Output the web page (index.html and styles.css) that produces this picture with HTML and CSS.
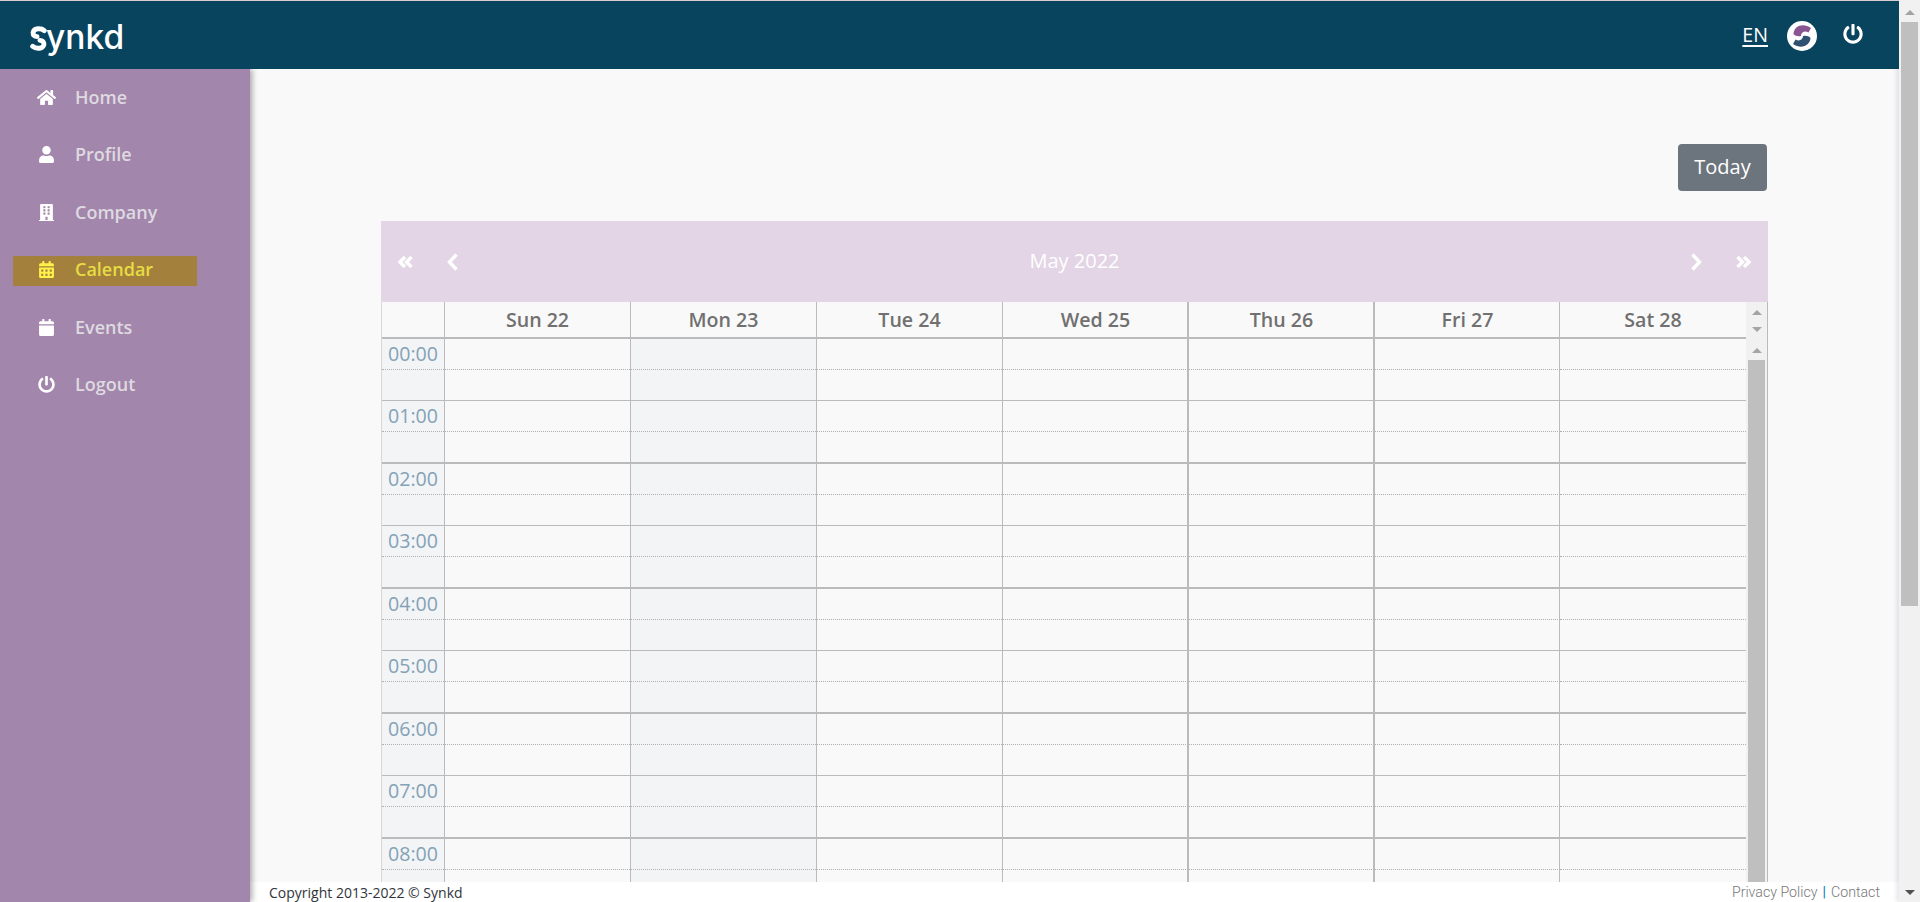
FILE: index.html
```html
<!DOCTYPE html>
<html lang="en">
<head>
<meta charset="utf-8">
<title>Synkd - Calendar</title>
<link rel="stylesheet" href="styles.css">
</head>
<body>
<div class="window">
  <div class="app">
    <header class="topbar">
      <a class="logo" href="#">
        <svg class="logo-s" viewBox="0 0 15 23"><path d="M12.800 4.200C10 1.800 3.500 1.600 2.600 5.800 2.200 8.500 4 9.800 6.200 9.800"/><path d="M2.200 18.800C5 21.200 11.500 21.400 12.400 17.200 12.800 14.500 11 13.200 8.800 13.200"/></svg>
        <span class="logo-text">ynkd</span>
      </a>
      <nav class="top-actions">
        <a class="lang" href="#">EN</a>
        <svg class="avatar" viewBox="0 0 30 30"><circle cx="15" cy="15" r="15" fill="#fff"/><path class="av-top" d="M6.500 13C7 5 16 1.500 24 7L21.500 11.500C18 9.500 14 11 14 15 11 15.500 8 15 6.500 13z"/><path class="av-bottom" d="M23.500 17C23 25 14 28.500 6 23L8.500 18.500C12 20.500 16 19 16 15 19 14.500 22 15 23.500 17z"/></svg>
        <svg class="power" viewBox="0 0 512 512"><path d="M400 54.100c63 45 104 118.600 104 201.900 0 136.800-110.800 247.700-247.500 248C120 504.300 8.200 393 8 256.400 7.900 173.100 48.900 99.300 111.800 54.200c11.700-8.300 28-4.800 35 7.700L162.600 90c5.900 10.500 3.100 23.800-6.600 31-41.500 30.800-68 79.600-68 134.900-.1 92.300 74.500 168.100 168 168.100 91.600 0 168.600-74.200 168-169.100-.3-51.800-24.700-101.800-68.100-134-9.700-7.200-12.400-20.500-6.500-30.900l15.800-28.100c7-12.400 23.200-16.100 34.800-7.800zM296 264V24c0-13.300-10.700-24-24-24h-32c-13.300 0-24 10.700-24 24v240c0 13.300 10.700 24 24 24h32c13.300 0 24-10.700 24-24z"/></svg>
      </nav>
    </header>
    <div class="body">
      <aside class="sidebar">
        <a class="nav-item" href="#"><span class="nav-icon"><svg viewBox="0 0 576 512" class="i-home"><path d="M280.370 148.260L96 300.110V464a16 16 0 0 0 16 16l112.060-.29a16 16 0 0 0 15.920-16V368a16 16 0 0 1 16-16h64a16 16 0 0 1 16 16v95.640a16 16 0 0 0 16 16.050L464 480a16 16 0 0 0 16-16V300L295.670 148.260a12.190 12.190 0 0 0-15.300 0zM571.600 251.470L488 182.560V44.050a12 12 0 0 0-12-12h-56a12 12 0 0 0-12 12v72.610L318.470 43a48 48 0 0 0-61 0L4.340 251.470a12 12 0 0 0-1.600 16.900l25.500 31A12 12 0 0 0 45.150 301l235.220-193.740a12.190 12.190 0 0 1 15.300 0L530.900 301a12 12 0 0 0 16.900-1.600l25.500-31a12 12 0 0 0-1.700-16.930z"/></svg></span>Home</a>
        <a class="nav-item" href="#"><span class="nav-icon"><svg viewBox="0 0 448 512"><path d="M224 256c70.700 0 128-57.300 128-128S294.700 0 224 0 96 57.300 96 128s57.300 128 128 128zm89.600 32h-16.700c-22.200 10.200-46.900 16-72.900 16s-50.600-5.800-72.900-16h-16.700C60.200 288 0 348.200 0 422.400V464c0 26.500 21.500 48 48 48h352c26.500 0 48-21.500 48-48v-41.600c0-74.200-60.200-134.400-134.400-134.400z"/></svg></span>Profile</a>
        <a class="nav-item" href="#"><span class="nav-icon"><svg viewBox="0 0 448 512"><path d="M436 480h-20V24c0-13.255-10.745-24-24-24H56C42.745 0 32 10.745 32 24v456H12c-6.627 0-12 5.373-12 12v20h448v-20c0-6.627-5.373-12-12-12zM128 76c0-6.627 5.373-12 12-12h40c6.627 0 12 5.373 12 12v40c0 6.627-5.373 12-12 12h-40c-6.627 0-12-5.373-12-12V76zm0 96c0-6.627 5.373-12 12-12h40c6.627 0 12 5.373 12 12v40c0 6.627-5.373 12-12 12h-40c-6.627 0-12-5.373-12-12v-40zm52 148h-40c-6.627 0-12-5.373-12-12v-40c0-6.627 5.373-12 12-12h40c6.627 0 12 5.373 12 12v40c0 6.627-5.373 12-12 12zm76 160h-64v-84c0-6.627 5.373-12 12-12h40c6.627 0 12 5.373 12 12v84zm64-172c0 6.627-5.373 12-12 12h-40c-6.627 0-12-5.373-12-12v-40c0-6.627 5.373-12 12-12h40c6.627 0 12 5.373 12 12v40zm0-96c0 6.627-5.373 12-12 12h-40c-6.627 0-12-5.373-12-12v-40c0-6.627 5.373-12 12-12h40c6.627 0 12 5.373 12 12v40zm0-96c0 6.627-5.373 12-12 12h-40c-6.627 0-12-5.373-12-12V76c0-6.627 5.373-12 12-12h40c6.627 0 12 5.373 12 12v40z"/></svg></span>Company</a>
        <a class="nav-item active" href="#"><span class="nav-icon"><svg viewBox="0 0 448 512"><path d="M0 464c0 26.500 21.500 48 48 48h352c26.500 0 48-21.500 48-48V192H0v272zm320-196c0-6.600 5.400-12 12-12h40c6.600 0 12 5.400 12 12v40c0 6.600-5.400 12-12 12h-40c-6.600 0-12-5.400-12-12v-40zm0 128c0-6.600 5.400-12 12-12h40c6.600 0 12 5.400 12 12v40c0 6.600-5.400 12-12 12h-40c-6.600 0-12-5.400-12-12v-40zM192 268c0-6.600 5.400-12 12-12h40c6.600 0 12 5.400 12 12v40c0 6.600-5.400 12-12 12h-40c-6.600 0-12-5.400-12-12v-40zm0 128c0-6.600 5.400-12 12-12h40c6.600 0 12 5.400 12 12v40c0 6.600-5.400 12-12 12h-40c-6.600 0-12-5.400-12-12v-40zM64 268c0-6.600 5.400-12 12-12h40c6.600 0 12 5.400 12 12v40c0 6.600-5.400 12-12 12H76c-6.600 0-12-5.400-12-12v-40zm0 128c0-6.600 5.400-12 12-12h40c6.600 0 12 5.400 12 12v40c0 6.600-5.400 12-12 12H76c-6.600 0-12-5.400-12-12v-40zM400 64h-48V16c0-8.800-7.200-16-16-16h-32c-8.800 0-16 7.200-16 16v48H160V16c0-8.800-7.200-16-16-16h-32c-8.800 0-16 7.200-16 16v48H48C21.500 64 0 85.500 0 112v48h448v-48c0-26.500-21.500-48-48-48z"/></svg></span>Calendar</a>
        <a class="nav-item" href="#"><span class="nav-icon"><svg viewBox="0 0 448 512"><path d="M12 192h424c6.600 0 12 5.400 12 12v260c0 26.500-21.500 48-48 48H48c-26.500 0-48-21.500-48-48V204c0-6.600 5.400-12 12-12zm436-44v-36c0-26.500-21.500-48-48-48h-48V12c0-6.600-5.400-12-12-12h-40c-6.600 0-12 5.400-12 12v52H160V12c0-6.600-5.400-12-12-12h-40c-6.600 0-12 5.400-12 12v52H48C21.500 64 0 85.500 0 112v36c0 6.600 5.400 12 12 12h424c6.600 0 12-5.400 12-12z"/></svg></span>Events</a>
        <a class="nav-item" href="#"><span class="nav-icon"><svg class="i-power" viewBox="0 0 512 512"><path d="M400 54.100c63 45 104 118.600 104 201.900 0 136.800-110.800 247.700-247.500 248C120 504.300 8.200 393 8 256.400 7.900 173.100 48.900 99.300 111.800 54.200c11.700-8.300 28-4.800 35 7.700L162.600 90c5.900 10.500 3.100 23.800-6.600 31-41.500 30.800-68 79.600-68 134.900-.1 92.300 74.500 168.100 168 168.100 91.600 0 168.600-74.200 168-169.100-.3-51.800-24.700-101.800-68.100-134-9.700-7.200-12.400-20.500-6.500-30.900l15.800-28.100c7-12.400 23.200-16.100 34.800-7.800zM296 264V24c0-13.300-10.700-24-24-24h-32c-13.300 0-24 10.700-24 24v240c0 13.300 10.700 24 24 24h32c13.300 0 24-10.700 24-24z"/></svg></span>Logout</a>
      </aside>
      <div class="content">
        <main class="main">
          <div class="today-row"><button class="today-btn" type="button">Today</button></div>
          <section class="calendar">
            <div class="cal-toolbar">
              <div class="cal-nav">
                <svg class="chev-double" viewBox="0 0 15 12"><path d="M7 1L2 6l5 5M13.500 1l-5 5 5 5"/></svg>
                <svg class="chev-single" viewBox="0 0 11 18"><path d="M9.500 1.500L2.500 9l7 7.500"/></svg>
              </div>
              <div class="cal-title">May 2022</div>
              <div class="cal-nav">
                <svg class="chev-single" viewBox="0 0 11 18"><path d="M1.500 1.500l7 7.500-7 7.500"/></svg>
                <svg class="chev-double" viewBox="0 0 15 12"><path d="M1.500 1l5 5-5 5M8 1l5 5-5 5"/></svg>
              </div>
            </div>
            <div class="cal-grid">
              <div class="cal-table">
                <div class="cal-head">
                  <div class="head-corner"></div>
                  <div class="head-day">Sun 22</div>
                  <div class="head-day">Mon 23</div>
                  <div class="head-day">Tue 24</div>
                  <div class="head-day">Wed 25</div>
                  <div class="head-day">Thu 26</div>
                  <div class="head-day">Fri 27</div>
                  <div class="head-day">Sat 28</div>
                </div>
                <div class="hour even"><div class="time">00:00</div><div class="slot"></div><div class="slot today"></div><div class="slot"></div><div class="slot"></div><div class="slot"></div><div class="slot"></div><div class="slot"></div></div>
                <div class="hour"><div class="time">01:00</div><div class="slot"></div><div class="slot today"></div><div class="slot"></div><div class="slot"></div><div class="slot"></div><div class="slot"></div><div class="slot"></div></div>
                <div class="hour even"><div class="time">02:00</div><div class="slot"></div><div class="slot today"></div><div class="slot"></div><div class="slot"></div><div class="slot"></div><div class="slot"></div><div class="slot"></div></div>
                <div class="hour"><div class="time">03:00</div><div class="slot"></div><div class="slot today"></div><div class="slot"></div><div class="slot"></div><div class="slot"></div><div class="slot"></div><div class="slot"></div></div>
                <div class="hour even"><div class="time">04:00</div><div class="slot"></div><div class="slot today"></div><div class="slot"></div><div class="slot"></div><div class="slot"></div><div class="slot"></div><div class="slot"></div></div>
                <div class="hour"><div class="time">05:00</div><div class="slot"></div><div class="slot today"></div><div class="slot"></div><div class="slot"></div><div class="slot"></div><div class="slot"></div><div class="slot"></div></div>
                <div class="hour even"><div class="time">06:00</div><div class="slot"></div><div class="slot today"></div><div class="slot"></div><div class="slot"></div><div class="slot"></div><div class="slot"></div><div class="slot"></div></div>
                <div class="hour"><div class="time">07:00</div><div class="slot"></div><div class="slot today"></div><div class="slot"></div><div class="slot"></div><div class="slot"></div><div class="slot"></div><div class="slot"></div></div>
                <div class="hour even"><div class="time">08:00</div><div class="slot"></div><div class="slot today"></div><div class="slot"></div><div class="slot"></div><div class="slot"></div><div class="slot"></div><div class="slot"></div></div>
              </div>
              <div class="cal-scroll">
                <div class="arrow-up"></div>
                <div class="arrow-down"></div>
                <div class="arrow-up second"></div>
                <div class="cal-thumb"></div>
              </div>
            </div>
          </section>
        </main>
        <footer class="footer">
          <span class="copyright">Copyright 2013-2022 © Synkd</span>
          <span class="legal"><a href="#">Privacy Policy</a><span class="sep">|</span><a href="#">Contact</a></span>
        </footer>
      </div>
    </div>
  </div>
  <div class="page-scroll">
    <div class="arrow-up"></div>
    <div class="page-thumb"></div>
    <div class="arrow-down dark"></div>
  </div>
</div>
</body>
</html>
```

FILE: styles.css
```css
* { box-sizing: border-box; }
html, body { margin: 0; height: 902px; overflow: hidden; }
body { font-family: "Open Sans", "Liberation Sans", sans-serif; background: #f9f9f9; }
a { color: inherit; text-decoration: none; }

.window { display: flex; width: 1920px; height: 902px; }
.app { width: 1899px; display: flex; flex-direction: column; }

.topbar {
  position: relative; z-index: 2;
  height: 69px; flex: none;
  background: #08445e; border-top: 1px solid #d9cdd0;
  display: flex; align-items: center; justify-content: space-between;
  padding: 0 36px 0 30px;
}
.logo { display: flex; align-items: flex-start; color: #fff; height: 32px; }
.logo-s { width: 17px; height: 25px; margin-top: 7px; fill: none; stroke: #fff; stroke-width: 4.5; stroke-linecap: round; }
.logo-text { font-family: Inter, "Open Sans", sans-serif; font-weight: 500; font-size: 33.5px; line-height: 32px; margin-left: -1px; margin-top: 2px; }
.top-actions { display: flex; align-items: center; color: #fff; }
.lang { font-size: 19.6px; line-height: 24px; text-decoration: underline; text-decoration-thickness: 2px; text-underline-offset: 3px; margin-right: 19px; }
.avatar { width: 30px; height: 30px; margin-right: 26px; margin-top: 2px; }
.av-top { fill: #8a5590; }
.av-bottom { fill: #2f5272; }
.power { width: 20px; height: 20px; fill: #fff; margin-bottom: 2px; }

.body { flex: 1; min-height: 0; display: flex; }
.sidebar {
  position: relative; z-index: 1;
  width: 250px; flex: none;
  background: #a386ab;
  box-shadow: 2px 0 6px rgba(0, 0, 0, .35);
  padding-top: 14.5px;
  display: flex; flex-direction: column; gap: 27.5px;
}
.nav-item {
  display: flex; align-items: center;
  width: 184px; height: 30px; margin-left: 13px; padding: 0 0 3px 24px;
  font-size: 18px; font-weight: 600; line-height: 27px;
  color: #dedae1;
}
.nav-icon { width: 19px; height: 20px; margin-right: 19px; display: flex; align-items: center; justify-content: center; }
.nav-icon svg { width: 15px; height: 17px; fill: #fff; }
.nav-icon svg.i-home { width: 19px; }
.nav-icon svg.i-power { width: 17px; }
.nav-item.active { background: #a3803c; color: #e6dc44; }
.nav-item.active svg { fill: #fff04a; }

.content { flex: 1; min-width: 0; display: flex; flex-direction: column; }
.main { flex: 1; min-height: 0; overflow: hidden; background: #f9f9f9; padding: 75px 131px 0; }
.today-row { display: flex; justify-content: flex-end; margin-bottom: 30px; padding-right: 1px; }
.today-btn {
  width: 89px; height: 47px; border: 0; border-radius: 4px; padding: 0 0 2px;
  background: #6c757d; color: #fff;
  font-family: inherit; font-size: 20px;
}

.cal-toolbar {
  height: 81px; background: #e3d5e6;
  display: flex; align-items: center; justify-content: space-between;
  padding: 0 17px;
}
.cal-title { color: #fff; font-size: 20px; padding-bottom: 2px; }
.cal-nav { display: flex; align-items: center; gap: 34px; }
.cal-nav svg { fill: none; stroke: #fff; stroke-width: 3.4; }
.chev-double { width: 15px; height: 12px; }
.chev-single { width: 11px; height: 18px; }

.cal-grid { display: flex; border-right: 1px solid #bbb; }
.cal-table { width: 1365px; flex: none; border-left: 1px solid #d8d8d8; }
.cal-head { display: grid; grid-template-columns: 62px repeat(7, 186px); height: 35px; }
.head-day {
  border-left: 1px solid #bbb;
  text-align: center; font-size: 19.6px; font-weight: 600; line-height: 36px; color: #707070;
}
.hour { display: grid; grid-template-columns: 62px repeat(7, 186px); height: 62.5px; border-top: 1px solid #bbb; }
.hour.even { border-top-width: 2px; }
.time, .slot { display: flex; flex-direction: column; }
.time { background: #f3f4f6; color: #84a2b6; font-size: 19.6px; line-height: 30px; text-align: center; position: relative; }
.time::after {
  content: ""; position: absolute; left: 0; right: 0; top: 50%;
  border-top: 1px dotted #b0b0b0;
}
.slot { border-left: 1px solid #bbb; }
.slot::before { content: ""; flex: 1; border-bottom: 1px dotted #b0b0b0; }
.slot::after { content: ""; flex: 1; }
.slot.today { background: #f3f4f6; }
.head-day:nth-child(6), .head-day:nth-child(7), .slot:nth-child(6), .slot:nth-child(7) { margin-left: -1px; border-left-width: 2px; }
.head-day:nth-child(8), .slot:nth-child(8) { margin-left: -1px; }

.cal-scroll { width: 21px; flex: none; background: #f1f1f1; display: flex; flex-direction: column; align-items: center; }
.cal-scroll .arrow-up { margin-top: 8px; }
.cal-scroll .arrow-down { margin-top: 12px; }
.cal-scroll .arrow-up.second { margin-top: 16px; }
.cal-thumb { width: 17px; flex: 1; margin-top: 7px; background: #bfbfbf; }

.arrow-up { width: 0; height: 0; border: 5px solid transparent; border-top: 0; border-bottom: 5px solid #a3a3a3; }
.arrow-down { width: 0; height: 0; border: 5px solid transparent; border-bottom: 0; border-top: 5px solid #a3a3a3; }
.arrow-down.dark { border-top-color: #505050; }

.footer {
  height: 20px; flex: none; background: #fff;
  display: flex; justify-content: space-between; align-items: center;
  padding: 0 19px;
}
.copyright { font-size: 14px; color: #30353a; }
.legal { font-family: Roboto, sans-serif; font-size: 14.2px; font-weight: 300; color: #787878; }
.sep { color: #0a78b0; font-weight: 400; margin: 0 5px; }

.page-scroll {
  position: relative; z-index: 1;
  width: 21px; height: 902px; flex: none;
  background: #f1f1f1;
  box-shadow: -3px 0 4px rgba(70, 70, 110, .12);
  display: flex; flex-direction: column; align-items: center;
  padding: 10px 0 7px;
}
.page-thumb { width: 17px; height: 584px; margin-top: 7px; margin-bottom: auto; background: #bfbfbf; }
```
